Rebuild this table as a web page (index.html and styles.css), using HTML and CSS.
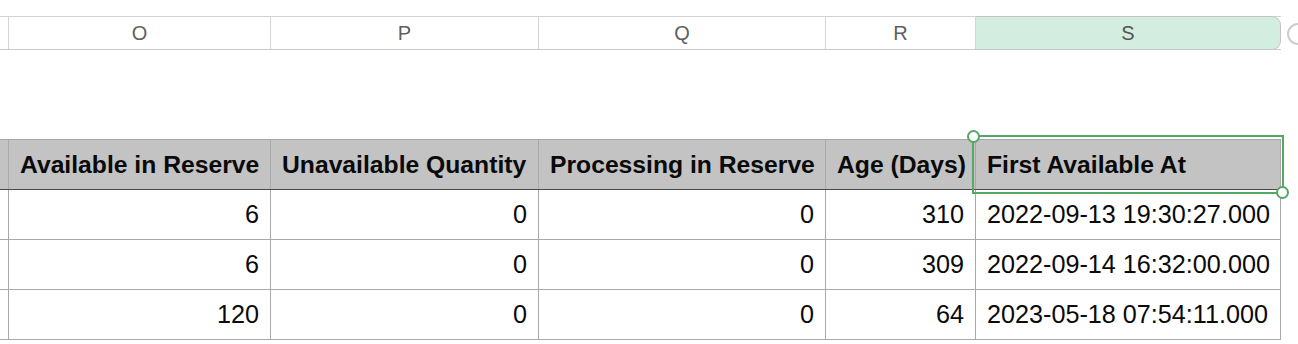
FILE: index.html
```html
<!DOCTYPE html>
<html>
<head>
<meta charset="utf-8">
<link rel="stylesheet" href="styles.css">
</head>
<body>
<div class="sheet">
  <div class="colbar">
    <div class="colhead c-n"></div>
    <div class="colhead c-o">O</div>
    <div class="colhead c-p">P</div>
    <div class="colhead c-q">Q</div>
    <div class="colhead c-r">R</div>
    <div class="colhead c-s selected">S</div>
    <div class="addbtn"></div>
  </div>

  <div class="grid">
    <div class="row head">
      <div class="cell c-n"></div>
      <div class="cell c-o">Available in Reserve</div>
      <div class="cell c-p">Unavailable Quantity</div>
      <div class="cell c-q">Processing in Reserve</div>
      <div class="cell c-r">Age (Days)</div>
      <div class="cell c-s sel-cell">First Available At
        <div class="selection"><span class="knob tl"></span><span class="knob br"></span></div>
      </div>
    </div>
    <div class="row">
      <div class="cell c-n"></div>
      <div class="cell c-o num">6</div>
      <div class="cell c-p num">0</div>
      <div class="cell c-q num">0</div>
      <div class="cell c-r num">310</div>
      <div class="cell c-s">2022-09-13 19:30:27.000</div>
    </div>
    <div class="row">
      <div class="cell c-n"></div>
      <div class="cell c-o num">6</div>
      <div class="cell c-p num">0</div>
      <div class="cell c-q num">0</div>
      <div class="cell c-r num">309</div>
      <div class="cell c-s">2022-09-14 16:32:00.000</div>
    </div>
    <div class="row">
      <div class="cell c-n"></div>
      <div class="cell c-o num">120</div>
      <div class="cell c-p num">0</div>
      <div class="cell c-q num">0</div>
      <div class="cell c-r num">64</div>
      <div class="cell c-s">2023-05-18 07:54:11.000</div>
    </div>
  </div>
</div>
</body>
</html>
```
FILE: styles.css
```css
* { box-sizing: border-box; }
html, body {
  margin: 0;
  padding: 0;
  background: #ffffff;
  overflow: hidden;
}
body {
  width: 1298px;
  height: 344px;
  font-family: "Liberation Sans", Arial, Helvetica, sans-serif;
}
.sheet {
  padding-top: 16px;
  position: relative;
}

/* column letter bar */
.colbar {
  display: flex;
  height: 34px;
  border-top: 1px solid #d2d2d2;
  border-bottom: 1px solid #c9c9c9;
  width: 1281px;
  position: relative;
}
.colhead {
  display: flex;
  align-items: center;
  justify-content: center;
  font-size: 20px;
  color: #5f5f5f;
  border-right: 1px solid #d4d4d4;
  height: 32px;
}
.colbar .c-s {
  border-right: none;
}
.colhead.selected {
  background: #d3ede0;
  border-top-right-radius: 9px;
  border-bottom-right-radius: 9px;
  border: 1px solid #c4c4c4;
  border-left: none;
  margin-top: -1px;
  height: 34px;
  margin-bottom: -1px;
  color: #555;
}
.addbtn {
  position: absolute;
  left: 1287px;
  top: 6px;
  width: 22px;
  height: 22px;
  border-radius: 50%;
  border: 2px solid #cdcdcd;
}

/* column widths (include right border) */
.c-n { width: 9px; }
.c-o { width: 262px; }
.c-p { width: 268px; }
.c-q { width: 287px; }
.c-r { width: 150px; }
.c-s { width: 305px; }

/* data grid */
.grid {
  margin-top: 89px;
  width: 1281px;
}
.row {
  display: flex;
  height: 50px;
  border-bottom: 1px solid #a9a9a9;
}
.row.head {
  height: 51px;
  background: #c2c3c2;
  border-top: 1px solid #a8a8a8;
  border-bottom: 1px solid #4a4a4a;
}
.cell {
  display: flex;
  align-items: center;
  padding: 0 11px;
  border-right: 1px solid #a9a9a9;
  font-size: 25.2px;
  color: #0a0a0a;
  white-space: nowrap;
}
.row .c-n { padding: 0; }
.head .cell {
  font-weight: bold;
  font-size: 24.7px;
  color: #0a0a0a;
}
.num {
  justify-content: flex-end;
}
.sel-cell {
  position: relative;
}
.selection {
  position: absolute;
  left: -4px;
  top: -5px;
  right: -4px;
  bottom: -5px;
  border: 2px solid #55a764;
  pointer-events: none;
}
.knob {
  position: absolute;
  width: 13px;
  height: 13px;
  border-radius: 50%;
  background: #ffffff;
  border: 2px solid #55a764;
}
.knob.tl { left: -7px; top: -7px; }
.knob.br { right: -7px; bottom: -7px; }
```
